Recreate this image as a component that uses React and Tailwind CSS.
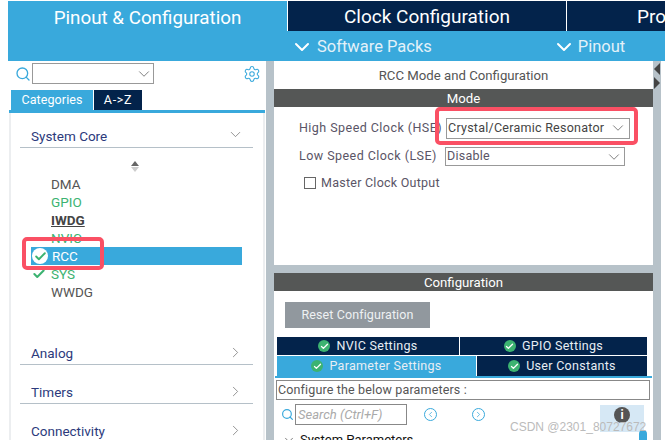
import { ChevronDown, ChevronRight, Search, Settings, Check, ChevronLeft } from 'lucide-react';

const Badge = () => (
  <span className="w-[12px] h-[12px] rounded-full bg-[#3cb371] flex items-center justify-center shrink-0">
    <Check size={9} strokeWidth={3.5} className="text-white" />
  </span>
);

const CategoryRow = ({ label, mt }) => (
  <div className={`flex items-center justify-between h-[26px] pt-[4px] border-b border-[#b5c0c8] pl-[11px] pr-[9px] text-[13.5px] text-[#2c3a7c] ${mt}`}>
    <span>{label}</span>
    <ChevronRight size={17} strokeWidth={1.1} className="text-[#777] mt-[-3px]" />
  </div>
);

const SubTab = ({ label, active, className }) => (
  <div className={`flex items-center justify-center gap-[6px] text-[12.5px] tracking-[0.3px] text-[#e8eef4] ${active ? 'bg-[#39a9dc]' : 'bg-[#03234b]'} ${className}`}>
    <Badge />
    <span>{label}</span>
  </div>
);

const App = () => {
  return (
    <div className="relative w-[665px] h-[440px] overflow-hidden bg-white pl-2 flex flex-col font-['Roboto',sans-serif]">
      {/* top tabs */}
      <div className="flex h-[61px] bg-[#39a9dc] shrink-0 border-t border-white">
        <div className="w-[279px] shrink-0 flex justify-center pt-[4px] text-[18.8px] text-white leading-[26px] whitespace-nowrap">
          <span>Pinout &amp; Configuration</span>
        </div>
        <div className="flex-1 min-w-0 flex flex-col">
          <div className="flex h-[30px] bg-[#03234b] text-white text-[19px] leading-[26px] border-l border-white whitespace-nowrap overflow-hidden">
            <div className="w-[279px] shrink-0 text-center pt-[3px] border-r border-white">Clock Configuration</div>
            <div className="pl-[70px] pt-[3px]">Project Manager</div>
          </div>
          <div className="flex items-center h-[30px] pt-[2px] text-[16.5px] text-[#e3f1f9]">
            <ChevronDown size={24} strokeWidth={2} className="ml-[3px] mr-[3px] text-white" />
            <span>Software Packs</span>
            <ChevronDown size={24} strokeWidth={2} className="ml-[120px] mr-[2px] text-white" />
            <span>Pinout</span>
          </div>
        </div>
      </div>

      <div className="flex flex-1 min-h-0">
        {/* left panel */}
        <div className="w-[258px] shrink-0 flex flex-col">
          <div className="flex items-start h-[29px] pt-[2px] pl-[7px] pr-[5px] shrink-0">
            <Search size={16} strokeWidth={2} className="text-[#39a9dc] mt-[3px]" />
            <div className="ml-px w-[122px] h-[21px] border border-[#999] flex items-center justify-end">
              <ChevronDown size={18} strokeWidth={1.1} className="text-[#666]" />
            </div>
            <Settings size={18} strokeWidth={1.4} className="ml-auto text-[#39a9dc] mt-[2px]" />
          </div>
          <div className="flex h-[20px] pl-[3px] text-[12.5px] text-white shrink-0">
            <div className="w-[82px] bg-[#39a9dc] flex items-center justify-center tracking-[0.1px]">Categories</div>
            <div className="ml-px w-[48px] bg-[#03234b] flex items-center justify-center tracking-[0.7px]">A-&gt;Z</div>
          </div>
          <div className="h-[3px] bg-[#39a9dc] shrink-0 ml-px mr-px"></div>
          <div className="flex-1 min-h-0 border-x-2 border-[#eceef0] ml-px mr-px pl-[9px] pr-[10px]">
            <div className="flex items-center justify-between h-[35px] pt-[12px] border-b border-[#b5c0c8] pl-[11px] pr-[9px] text-[13.5px] text-[#2c3a7c]">
              <span>System Core</span>
              <ChevronDown size={17} strokeWidth={1.1} className="text-[#777] mt-[-3px]" />
            </div>
            <div className="flex flex-col items-center mt-[13px] pr-[3px]">
              <span className="w-0 h-0 border-x-[4px] border-x-transparent border-b-[5px] border-b-[#666]"></span>
              <span className="w-0 h-0 mt-px border-x-[4px] border-x-transparent border-t-[5px] border-t-[#ccc]"></span>
            </div>
            <div className="mt-[3px] text-[13.5px] leading-[18px]">
              <div className="pl-[31px] text-[#555]">DMA</div>
              <div className="pl-[31px] text-[#3cb371]">GPIO</div>
              <div className="pl-[31px] text-[#444] font-bold underline">IWDG</div>
              <div className="pl-[31px] text-[#3cb371]">NVIC</div>
              <div className="flex items-center h-[18px] w-[211px] ml-[11px] bg-[#39a9dc] text-white">
                <span className="ml-px w-[16px] h-[16px] rounded-full bg-white flex items-center justify-center">
                  <Check size={13} strokeWidth={3.5} className="text-[#3cb371]" />
                </span>
                <span className="ml-[4px]">RCC</span>
              </div>
              <div className="flex items-center text-[#3cb371] ml-[12px]">
                <Check size={14} strokeWidth={3.5} />
                <span className="ml-[5px]">SYS</span>
              </div>
              <div className="pl-[31px] text-[#555]">WWDG</div>
            </div>
            <CategoryRow label="Analog" mt="mt-[38px]" />
            <CategoryRow label="Timers" mt="mt-[13px]" />
            <CategoryRow label="Connectivity" mt="mt-[13px]" />
          </div>
        </div>

        {/* splitter */}
        <div className="w-[8px] shrink-0 bg-[#b7c2c9]"></div>

        {/* right panel */}
        <div className="w-[379px] shrink-0 flex flex-col text-[#5a5566]">
          <div className="h-[28px] flex items-center justify-center text-[13.2px] pt-[1px] text-[#555] shrink-0">RCC Mode and Configuration</div>
          <div className="h-[18px] pt-[1px] bg-[#555756] text-white text-[13.2px] flex items-center justify-center shrink-0">Mode</div>
          <div className="h-[158px] shrink-0 text-[12.5px] tracking-[0.25px] pt-[10px]">
            <div className="flex items-center h-[21px] pt-px">
              <span className="ml-[25px] w-[147px] whitespace-nowrap tracking-[0.45px]">High Speed Clock (HSE)</span>
              <div className="w-[184px] h-[21px] border border-[#999] flex items-center justify-between pl-px pr-[2px] text-[#444]">
                <span>Crystal/Ceramic Resonator</span>
                <ChevronDown size={18} strokeWidth={1.1} className="text-[#666]" />
              </div>
            </div>
            <div className="flex items-center mt-[9px] h-[19px]">
              <span className="ml-[25px] w-[146px] whitespace-nowrap tracking-[0.45px]">Low Speed Clock (LSE)</span>
              <div className="w-[180px] h-[19px] border border-[#999] flex items-center justify-between pl-px pr-px">
                <span>Disable</span>
                <ChevronDown size={18} strokeWidth={1.1} className="text-[#666]" />
              </div>
            </div>
            <div className="flex items-center mt-[11px] ml-[30px] h-[12px]">
              <span className="w-[12px] h-[12px] border border-[#666]"></span>
              <span className="ml-[5px]">Master Clock Output</span>
            </div>
          </div>
          <div className="h-[8px] bg-[#b7c2c9] shrink-0"></div>
          <div className="h-[18px] pt-[1px] bg-[#555756] text-white text-[13.2px] flex items-center justify-center shrink-0">Configuration</div>
          <div className="pl-[11px] mt-[11px] shrink-0">
            <div className="w-[145px] h-[26px] pt-px bg-[#91989e] text-[#eef1f3] text-[12.5px] tracking-[0.1px] flex items-center justify-center">Reset Configuration</div>
          </div>
          <div className="ml-[3px] w-[370px] mt-[9px] flex h-[18px] shrink-0">
            <SubTab label="NVIC Settings" className="w-[183px] border-r border-white" />
            <SubTab label="GPIO Settings" className="flex-1" />
          </div>
          <div className="ml-[3px] w-[370px] mt-px flex h-[20px] shrink-0">
            <SubTab label="Parameter Settings" active className="w-[199px]" />
            <SubTab label="User Constants" className="flex-1 border-l border-white" />
          </div>
          <div className="ml-[1px] w-[377px] h-[2px] bg-[#39a9dc] shrink-0"></div>
          <div className="ml-[2px] w-[374px] h-[20px] mt-[2px] border border-[#888] flex items-center text-[12.5px] tracking-[0.15px] text-[#555] pl-px shrink-0">Configure the below parameters :</div>
          <div className="flex items-start ml-[7px] mt-[4px] h-[21px] shrink-0">
            <Search size={13} strokeWidth={2.2} className="text-[#39a9dc] mt-[4px]" />
            <div className="ml-px w-[112px] h-[21px] border border-[#888] italic text-[13px] text-[#aaa] pl-[2px] pt-px flex items-center">Search (Ctrl+F)</div>
            <span className="ml-[17px] mt-[4px] w-[13px] h-[13px] rounded-full border border-[#39a9dc] flex items-center justify-center">
              <ChevronLeft size={9} strokeWidth={2} className="text-[#39a9dc]" />
            </span>
            <span className="ml-[35px] mt-[4px] w-[13px] h-[13px] rounded-full border border-[#39a9dc] flex items-center justify-center">
              <ChevronRight size={9} strokeWidth={2} className="text-[#39a9dc]" />
            </span>
            <span className="ml-[115px] mt-px w-[44px] h-[27px] bg-[#d6e8f5] flex items-start justify-center pt-[2px]">
              <span className="w-[16px] h-[16px] rounded-full bg-[#555] text-white text-[12px] leading-[16px] font-bold text-center">i</span>
            </span>
          </div>
          <div className="flex items-center ml-[8px] mt-[5px] text-[13px] text-[#111] shrink-0">
            <ChevronDown size={14} strokeWidth={1.4} className="text-[#666]" />
            <span className="ml-[4px]">System Parameters</span>
          </div>
        </div>

        {/* right gutter */}
        <div className="w-[8px] shrink-0 bg-[#b7c2c9] flex flex-col pt-[2px] pl-px">
          <span className="w-0 h-0 border-y-[6px] border-y-transparent border-r-[6px] border-r-[#444]"></span>
          <span className="w-0 h-0 mt-[2px] border-y-[6px] border-y-transparent border-l-[6px] border-l-[#444]"></span>
        </div>
      </div>

      {/* overlays */}
      <div className="absolute left-[639px] top-[430px] w-[8px] h-[10px] rounded-t-[4px] bg-[#39a9dc]"></div>
      <div className="absolute left-[22px] top-[237px] w-[82px] h-[33px] border-[4px] border-[#fa5064] rounded-[5px]"></div>
      <div className="absolute left-[435px] top-[107px] w-[203px] h-[38px] border-[4px] border-[#fa5064] rounded-[5px]"></div>
      <div className="absolute left-[510px] top-[418px] text-[12px] text-[#bbb] font-['Liberation_Sans',sans-serif]">CSDN @2301_80727672</div>
    </div>
  );
};

export default App;
